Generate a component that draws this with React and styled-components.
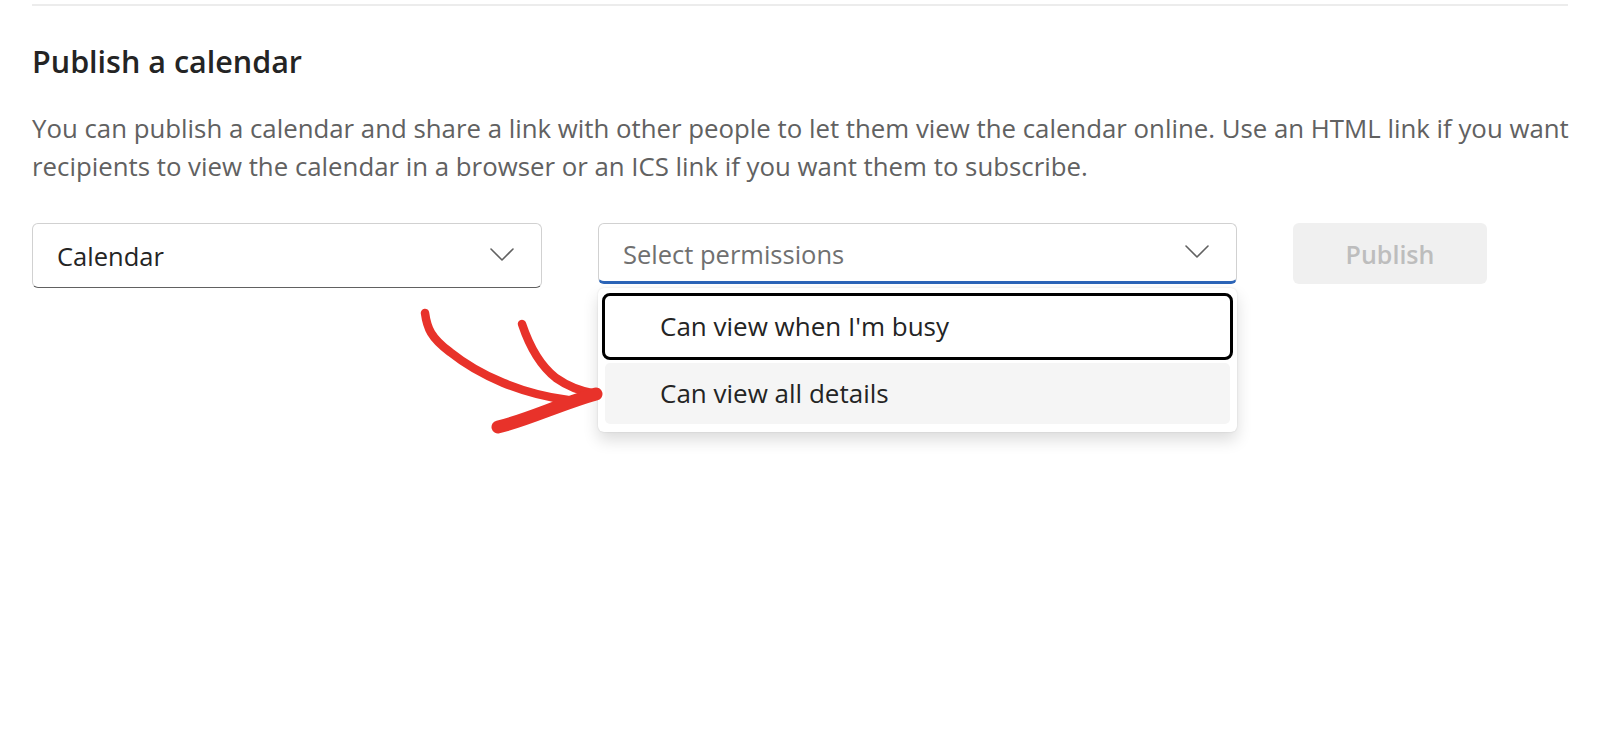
import React from 'react';
import styled, { createGlobalStyle } from 'styled-components';

const GlobalStyle = createGlobalStyle`
  html, body {
    margin: 0;
    padding: 0;
    background: #ffffff;
  }
  body {
    font-family: "Open Sans", "Noto Sans", sans-serif;
    color: #242424;
  }
`

const Page = styled.div`
  position: relative;
  min-height: 743px;
  padding: 4px 32px 0 32px;
  box-sizing: border-box;
`

const Divider = styled.div`
  height: 2px;
  background-color: #ececec;
`

const Title = styled.h2`
  margin: 40px 0 0 0;
  font-size: 30.5px;
  line-height: 1;
  font-weight: 600;
  color: #242424;
`

const Description = styled.p`
  margin: 32px -10px 0 0;
  font-size: 25.8px;
  line-height: 38px;
  color: #616161;
`

const Controls = styled.div`
  display: flex;
  align-items: flex-start;
  gap: 56px;
  margin-top: 38px;
`

const Field = styled.div`
  position: relative;
  width: ${props => props.width}px;
`

const Select = styled.div`
  display: flex;
  align-items: center;
  justify-content: space-between;
  box-sizing: border-box;
  height: ${props => props.open ? 61 : 65}px;
  padding: ${props => props.open ? '4px 27px 0 24px' : '2px 27px 0 24px'};
  border: 1px solid #d1d1d1;
  border-bottom: ${props => props.open ? '3px solid #2b64b7' : '1px solid #616161'};
  border-radius: 6px;
  background: #ffffff;
  font-size: 25.5px;
  color: ${props => props.placeholder ? '#707070' : '#242424'};

  svg {
    margin-top: ${props => props.open ? '-4px' : '-2px'};
  }
`

const Chevron = () => (
  <svg width="24" height="14" viewBox="0 0 24 14">
    <path d="M1 1 L12 12 L23 1" fill="none" stroke="#616161" strokeWidth="1.6" strokeLinecap="round" strokeLinejoin="round" />
  </svg>
)

const PublishButton = styled.button`
  width: 194px;
  height: 61px;
  padding-top: 2px;
  border: none;
  border-radius: 6px;
  background-color: #f0f0f0;
  color: #bdbdbd;
  font-family: "Open Sans", "Noto Sans", sans-serif;
  font-size: 25px;
  font-weight: 600;
`

const Menu = styled.div`
  position: absolute;
  top: calc(100% + 4px);
  left: 0;
  right: 0;
  display: flex;
  flex-direction: column;
  gap: 6px;
  padding: 8px 7px;
  border-radius: 6px;
  background: #ffffff;
  box-shadow: 0 8px 16px rgba(0, 0, 0, 0.14), 0 0 2px rgba(0, 0, 0, 0.12);
`

const MenuItem = styled.div`
  display: flex;
  align-items: center;
  height: 61px;
  padding-left: 55px;
  border-radius: 5px;
  font-size: 26px;
  color: #242424;
  background: ${props => props.hovered ? '#f5f5f5' : 'transparent'};
  outline: ${props => props.focused ? '3px solid #000000' : 'none'};
`

const Arrow = styled.svg`
  position: absolute;
  left: 400px;
  top: 290px;
  pointer-events: none;
`

const App = () => (
  <Page>
    <GlobalStyle />
    <Divider />
    <Title>Publish a calendar</Title>
    <Description>
      You can publish a calendar and share a link with other people to let them view the calendar online. Use an HTML link if you want recipients to view the calendar in a browser or an ICS link if you want them to subscribe.
    </Description>
    <Controls>
      <Field width={510}>
        <Select>
          Calendar
          <Chevron />
        </Select>
      </Field>
      <Field width={639}>
        <Select open placeholder>
          Select permissions
          <Chevron />
        </Select>
        <Menu>
          <MenuItem focused>Can view when I'm busy</MenuItem>
          <MenuItem hovered>Can view all details</MenuItem>
        </Menu>
      </Field>
      <PublishButton>Publish</PublishButton>
    </Controls>
    <Arrow width="220" height="160" viewBox="0 0 220 160">
      <g fill="none" stroke="#e8322a" strokeLinecap="round" strokeLinejoin="round">
        <path d="M25 23 C27 38, 31 48, 50 62 C80 86, 122 104, 168 110" strokeWidth="8.5" />
        <path d="M122 34 C128 52, 138 74, 156 88 C170 98, 184 102, 196 104" strokeWidth="8.5" />
        <path d="M98 137 C128 130, 160 114, 196 104" strokeWidth="13" />
      </g>
    </Arrow>
  </Page>
)

export default App
